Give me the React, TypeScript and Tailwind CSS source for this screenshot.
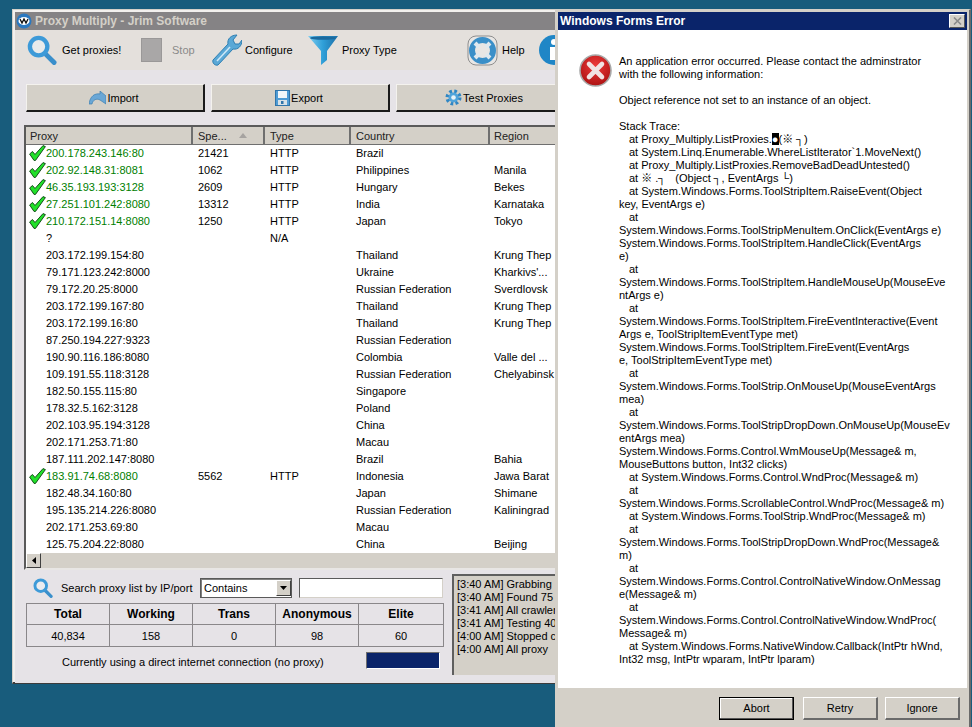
const proxies = [
  { ip: '200.178.243.146:80', speed: '21421', type: 'HTTP', country: 'Brazil', region: '', ok: true },
  { ip: '202.92.148.31:8081', speed: '1062', type: 'HTTP', country: 'Philippines', region: 'Manila', ok: true },
  { ip: '46.35.193.193:3128', speed: '2609', type: 'HTTP', country: 'Hungary', region: 'Bekes', ok: true },
  { ip: '27.251.101.242:8080', speed: '13312', type: 'HTTP', country: 'India', region: 'Karnataka', ok: true },
  { ip: '210.172.151.14:8080', speed: '1250', type: 'HTTP', country: 'Japan', region: 'Tokyo', ok: true },
  { ip: '?', speed: '', type: 'N/A', country: '', region: '' },
  { ip: '203.172.199.154:80', speed: '', type: '', country: 'Thailand', region: 'Krung Thep' },
  { ip: '79.171.123.242:8000', speed: '', type: '', country: 'Ukraine', region: "Kharkivs'..." },
  { ip: '79.172.20.25:8000', speed: '', type: '', country: 'Russian Federation', region: 'Sverdlovsk' },
  { ip: '203.172.199.167:80', speed: '', type: '', country: 'Thailand', region: 'Krung Thep' },
  { ip: '203.172.199.16:80', speed: '', type: '', country: 'Thailand', region: 'Krung Thep' },
  { ip: '87.250.194.227:9323', speed: '', type: '', country: 'Russian Federation', region: '' },
  { ip: '190.90.116.186:8080', speed: '', type: '', country: 'Colombia', region: 'Valle del ...' },
  { ip: '109.191.55.118:3128', speed: '', type: '', country: 'Russian Federation', region: 'Chelyabinsk' },
  { ip: '182.50.155.115:80', speed: '', type: '', country: 'Singapore', region: '' },
  { ip: '178.32.5.162:3128', speed: '', type: '', country: 'Poland', region: '' },
  { ip: '202.103.95.194:3128', speed: '', type: '', country: 'China', region: '' },
  { ip: '202.171.253.71:80', speed: '', type: '', country: 'Macau', region: '' },
  { ip: '187.111.202.147:8080', speed: '', type: '', country: 'Brazil', region: 'Bahia' },
  { ip: '183.91.74.68:8080', speed: '5562', type: 'HTTP', country: 'Indonesia', region: 'Jawa Barat', ok: true },
  { ip: '182.48.34.160:80', speed: '', type: '', country: 'Japan', region: 'Shimane' },
  { ip: '195.135.214.226:8080', speed: '', type: '', country: 'Russian Federation', region: 'Kaliningrad' },
  { ip: '202.171.253.69:80', speed: '', type: '', country: 'Macau', region: '' },
  { ip: '125.75.204.22:8080', speed: '', type: '', country: 'China', region: 'Beijing' },
];

const stats = [
  { label: 'Total', value: '40,834', cls: 'w-[83px]' },
  { label: 'Working', value: '158', cls: 'w-[83px]' },
  { label: 'Trans', value: '0', cls: 'w-[83px]' },
  { label: 'Anonymous', value: '98', cls: 'w-[83px]' },
  { label: 'Elite', value: '60', cls: 'flex-1' },
];

// only what shows beside the dialog
const logLines = [
  '[3:40 AM] Grabbing',
  '[3:40 AM] Found 75',
  '[3:41 AM] All crawler',
  '[3:41 AM] Testing 40',
  '[4:00 AM] Stopped c',
  '[4:00 AM] All proxy',
];

const traceTop = [
  'An application error occurred. Please contact the adminstrator',
  'with the following information:',
  '',
  'Object reference not set to an instance of an object.',
  '',
  'Stack Trace:',
];

const trace = [
  '  at System.Linq.Enumerable.WhereListIterator`1.MoveNext()',
  '  at Proxy_Multiply.ListProxies.RemoveBadDeadUntested()',
  '  at ※ .┐   (Object ┐, EventArgs └)',
  '  at System.Windows.Forms.ToolStripItem.RaiseEvent(Object',
  'key, EventArgs e)',
  '  at',
  'System.Windows.Forms.ToolStripMenuItem.OnClick(EventArgs e)',
  'System.Windows.Forms.ToolStripItem.HandleClick(EventArgs',
  'e)',
  '  at',
  'System.Windows.Forms.ToolStripItem.HandleMouseUp(MouseEve',
  'ntArgs e)',
  '  at',
  'System.Windows.Forms.ToolStripItem.FireEventInteractive(Event',
  'Args e, ToolStripItemEventType met)',
  'System.Windows.Forms.ToolStripItem.FireEvent(EventArgs',
  'e, ToolStripItemEventType met)',
  '  at',
  'System.Windows.Forms.ToolStrip.OnMouseUp(MouseEventArgs',
  'mea)',
  '  at',
  'System.Windows.Forms.ToolStripDropDown.OnMouseUp(MouseEv',
  'entArgs mea)',
  'System.Windows.Forms.Control.WmMouseUp(Message& m,',
  'MouseButtons button, Int32 clicks)',
  '  at System.Windows.Forms.Control.WndProc(Message& m)',
  '  at',
  'System.Windows.Forms.ScrollableControl.WndProc(Message& m)',
  '  at System.Windows.Forms.ToolStrip.WndProc(Message& m)',
  '  at',
  'System.Windows.Forms.ToolStripDropDown.WndProc(Message&',
  'm)',
  '  at',
  'System.Windows.Forms.Control.ControlNativeWindow.OnMessag',
  'e(Message& m)',
  '  at',
  'System.Windows.Forms.Control.ControlNativeWindow.WndProc(',
  'Message& m)',
  '  at System.Windows.Forms.NativeWindow.Callback(IntPtr hWnd,',
  'Int32 msg, IntPtr wparam, IntPtr lparam)',
];

function Magnifier({ size }: { size: number }) {
  return (
    <svg width={size} height={size} viewBox="0 0 30 31" className="shrink-0">
      <line x1="18" y1="19" x2="27.5" y2="28.5" stroke="#3a8fcb" strokeWidth="5" strokeLinecap="round" />
      <circle cx="11.5" cy="12" r="9" fill="#eef5fa" fillOpacity="0.5" stroke="#3d9ad8" strokeWidth="4.5" />
    </svg>
  );
}

function Wrench() {
  return (
    <svg width="32" height="32" viewBox="0 0 32 32" className="shrink-0">
      <path d="M3 26 L18 10 C17 5 21 1 27 1 L23 6 L25 10 L29 10 L32 6 C32 12 28 16 23 15 L8 31 C5 32 2 29 3 26 Z" fill="#5aa8d6" stroke="#2f7fb2" strokeWidth="1" />
      <line x1="7" y1="27" x2="20" y2="13" stroke="#cfe8f6" strokeWidth="1.5" />
    </svg>
  );
}

function Funnel() {
  return (
    <svg width="30" height="30" viewBox="0 0 30 30" className="shrink-0">
      <defs>
        <linearGradient id="fn" x1="0" y1="0" x2="1" y2="0">
          <stop offset="0" stopColor="#7fcdf0" />
          <stop offset="0.5" stopColor="#2f9fd8" />
          <stop offset="1" stopColor="#1c6fa8" />
        </linearGradient>
      </defs>
      <path d="M0 1 H30 L19 16 V25 L13 30 V16 Z" fill="url(#fn)" />
      <ellipse cx="15" cy="3" rx="13" ry="1.8" fill="#1b6a9e" />
    </svg>
  );
}

function LifeRing() {
  return (
    <svg width="31" height="31" viewBox="0 0 31 31" className="shrink-0">
      <rect x="1" y="1" width="29" height="29" rx="8" fill="#e8e6e4" stroke="#8d8d8d" />
      <circle cx="15.5" cy="15.5" r="10.5" fill="none" stroke="#3a8fc8" strokeWidth="6" />
      <path d="M8 8 L12 12 M23 8 L19 12 M8 23 L12 19 M23 23 L19 19" stroke="#dfe8ee" strokeWidth="4" />
    </svg>
  );
}

function InfoIcon() {
  return (
    <svg width="30" height="30" viewBox="0 0 30 30" className="shrink-0">
      <circle cx="15" cy="15" r="15" fill="#1f86c6" />
      <circle cx="15" cy="7" r="3" fill="#fff" />
      <rect x="11" y="12" width="8" height="13" fill="#fff" />
    </svg>
  );
}

function ImportIcon() {
  return (
    <svg width="17" height="14" viewBox="0 0 17 14" className="shrink-0">
      <path d="M0 13 C1 5 6 2 11 3 L11 0 L17 5 L17 13 L11 9 C7 7 4 9 3 13 Z" fill="#6aa7d6" stroke="#3d7fb0" strokeWidth="0.7" />
    </svg>
  );
}

function FloppyIcon() {
  return (
    <svg width="15" height="16" viewBox="0 0 15 16" className="shrink-0">
      <rect x="0.5" y="0.5" width="14" height="15" fill="#4e9bd4" stroke="#2f74aa" />
      <rect x="3" y="1" width="9" height="7" fill="#f2f6f9" />
      <rect x="3" y="10" width="9" height="5" fill="#d7e1e8" />
      <rect x="6" y="11" width="2.5" height="3" fill="#2f74aa" />
    </svg>
  );
}

function GearIcon() {
  return (
    <svg width="17" height="17" viewBox="0 0 17 17" className="shrink-0">
      <circle cx="8.5" cy="8.5" r="6.2" fill="none" stroke="#2f86c4" strokeWidth="3.6" strokeDasharray="2.6 2.27" />
      <circle cx="8.5" cy="8.5" r="5" fill="#4fa3da" />
      <circle cx="8.5" cy="8.5" r="2.3" fill="#e8f2f8" />
    </svg>
  );
}

function Check() {
  return (
    <svg width="17" height="16" viewBox="0 0 17 16" className="absolute left-[3px] top-0">
      <path d="M0.6 9 L3.5 6.5 L6 9.5 L14 0.6 L16.4 1.6 L6.5 15.4 L5 15.4 Z" fill="#22e02a" stroke="#0b3d10" strokeWidth="0.9" strokeLinejoin="round" />
    </svg>
  );
}

function ErrorIcon() {
  return (
    <svg width="33" height="33" viewBox="0 0 33 33" className="shrink-0">
      <defs>
        <radialGradient id="er" cx="0.5" cy="0.35" r="0.75">
          <stop offset="0" stopColor="#ee3a3a" />
          <stop offset="1" stopColor="#a30d0d" />
        </radialGradient>
      </defs>
      <circle cx="16.5" cy="16.5" r="15.5" fill="url(#er)" stroke="#a8a8a8" strokeWidth="1.6" />
      <path d="M10 10 L23 23 M23 10 L10 23" stroke="#f1e3e3" strokeWidth="4.6" strokeLinecap="round" />
    </svg>
  );
}

function ToolButton({ icon, label, disabled, cls }: { icon: React.ReactNode; label: string; disabled?: boolean; cls: string }) {
  return (
    <div className={`flex items-center ${cls}`}>
      {icon}
      <span className={disabled ? 'text-[#8a8a8a]' : 'text-black'}>{label}</span>
    </div>
  );
}

function WinButton({ icon, label }: { icon: React.ReactNode; label: string }) {
  return (
    <div className="flex h-[28px] w-[179px] shrink-0 items-center justify-center border-t border-l border-t-[#f4f2ee] border-l-[#f4f2ee] border-r-2 border-b-2 border-r-[#1a1a1a] border-b-[#1a1a1a] bg-[#d4d0c8] pr-[2px]">
      {icon}
      <span className="ml-[1px] pt-[1px]">{label}</span>
    </div>
  );
}

function DlgButton({ label, active }: { label: string; active?: boolean }) {
  return (
    <div className={`flex h-[23px] w-[75px] items-center justify-center bg-[#d4d0c8] ${active ? 'mr-[2px] border border-black shadow-[inset_-1px_-1px_0_#555,inset_1px_1px_0_#fff]' : 'border-t border-l border-t-white border-l-white border-r-2 border-b-2 border-r-[#6a6a6a] border-b-[#6a6a6a]'}`}>
      {label}
    </div>
  );
}

export default function App() {
  return (
    <div className="relative h-[727px] w-[972px] overflow-hidden bg-[#185c7c] text-[11px] leading-[13px] text-black [font-family:'Liberation_Sans','Noto_Sans_CJK_SC',sans-serif]">
      {/* Proxy Multiply window */}
      <div className="absolute left-[12px] top-[9px] h-[675px] w-[570px] border-b-2 border-b-[#3c3c3c] border-l border-l-[#d4d0c8] border-t border-t-[#d4d0c8] bg-[#f2f0ee] pl-[2px] pt-[2px]">
        <div className="flex h-[18px] items-center bg-[#858385] pl-[1px] text-[12px] font-bold text-[#d4d0c8]">
          <svg width="16" height="16" viewBox="0 0 16 16" className="mr-[3px] shrink-0">
            <circle cx="8" cy="8" r="7.5" fill="#2a78c0" />
            <ellipse cx="8" cy="8" rx="5.5" ry="4" fill="#fff" />
            <path d="M4 6 L6 10 L8 6 L10 10 L12 6" fill="none" stroke="#111" strokeWidth="1.3" />
          </svg>
          Proxy Multiply - Jrim Software
        </div>
        <div className="flex h-[40px] items-center bg-[#e4e0dc] pl-[12px]">
          <ToolButton cls="w-[114px] gap-[5px]" icon={<Magnifier size={30} />} label="Get proxies!" />
          <ToolButton
            cls="w-[69px] gap-[10px]"
            icon={<div className="h-[24px] w-[21px] shrink-0 border border-[#9a9898] bg-[#a9a7a7]" />}
            label="Stop"
            disabled
          />
          <ToolButton cls="w-[98px] gap-[3px]" icon={<Wrench />} label="Configure" />
          <ToolButton cls="w-[159px] gap-[4px]" icon={<Funnel />} label="Proxy Type" />
          <ToolButton cls="w-[72px] gap-[4px]" icon={<LifeRing />} label="Help" />
          <InfoIcon />
        </div>
        <div className="h-[613px] bg-[#e6e3e7] pl-[9px]">
          <div className="flex gap-[6px] pl-[2px] pt-[14px]">
            <WinButton icon={<ImportIcon />} label="Import" />
            <WinButton icon={<FloppyIcon />} label="Export" />
            <WinButton icon={<GearIcon />} label="Test Proxies" />
          </div>

          {/* Proxy list */}
          <div className="mt-[13px] h-[445px] w-[540px] border-2 border-b-[#e8e6e4] border-l-[#5a5a5a] border-r-[#5a5a5a] border-t-[#5a5a5a] bg-white">
            <div className="flex h-[18px] bg-[#d4d0c8] text-[#222]">
              <div className="w-[167px] border-r-2 border-b border-r-[#6f6f6f] border-b-[#6f6f6f] pl-[4px] pt-[3px]">Proxy</div>
              <div className="relative w-[72px] border-r-2 border-b border-r-[#6f6f6f] border-b-[#6f6f6f] pl-[5px] pt-[3px]">
                Spe...
                <svg width="8" height="5" viewBox="0 0 8 5" className="absolute left-[46px] top-[6px]">
                  <path d="M0 5 L4 0 L8 5 Z" fill="#a6a3a0" />
                </svg>
              </div>
              <div className="w-[86px] border-r-2 border-b border-r-[#6f6f6f] border-b-[#6f6f6f] pl-[5px] pt-[3px]">Type</div>
              <div className="w-[139px] border-r-2 border-b border-r-[#6f6f6f] border-b-[#6f6f6f] pl-[5px] pt-[3px]">Country</div>
              <div className="flex-1 border-b border-b-[#6f6f6f] pl-[4px] pt-[3px]">Region</div>
            </div>
            <div className="h-[408px]">
              {proxies.map((p) => (
                <div key={p.ip} className="relative flex h-[17px] items-center whitespace-nowrap">
                  {p.ok && <Check />}
                  <div className={`w-[167px] pl-[20px] ${p.ok ? 'text-[#008000]' : ''}`}>{p.ip}</div>
                  <div className="w-[72px] pl-[5px]">{p.speed}</div>
                  <div className="w-[86px] pl-[5px]">{p.type}</div>
                  <div className="w-[139px] pl-[5px]">{p.country}</div>
                  <div className="pl-[4px]">{p.region}</div>
                </div>
              ))}
            </div>
            <div className="flex h-[15px] bg-[#d4d0c8]">
              <div className="flex w-[15px] items-center justify-center border-t border-l border-t-white border-l-white border-r border-b border-r-[#404040] border-b-[#404040] bg-[#d4d0c8]">
                <svg width="4" height="7" viewBox="0 0 4 7">
                  <path d="M4 0 L0 3.5 L4 7 Z" fill="#000" />
                </svg>
              </div>
            </div>
          </div>

          <div className="flex">
            <div className="w-[428px]">
              {/* Search row */}
              <div className="mt-[8px] flex h-[20px] items-center pl-[9px]">
                <Magnifier size={20} />
                <span className="ml-[8px] w-[139px] whitespace-nowrap">Search proxy list by IP/port</span>
                <div className="flex h-[20px] w-[92px] items-center border border-[#5a5a5a] bg-white pl-[3px] shadow-[inset_1px_1px_0_#808080]">
                  <span className="flex-1">Contains</span>
                  <div className="flex h-[16px] w-[15px] items-center justify-center border-t border-l border-t-white border-l-white border-r border-b border-r-[#404040] border-b-[#404040] bg-[#d4d0c8]">
                    <svg width="7" height="4" viewBox="0 0 7 4">
                      <path d="M0 0 H7 L3.5 4 Z" fill="#000" />
                    </svg>
                  </div>
                </div>
                <div className="ml-[7px] h-[20px] w-[144px] border-t border-l border-t-[#5a5a5a] border-l-[#5a5a5a] border-r border-b border-r-[#d4d0c8] border-b-[#d4d0c8] bg-white" />
              </div>
              {/* Stats table */}
              <div className="ml-[2px] mt-[5px] flex h-[44px] w-[418px] border border-[#8a878a]">
                {stats.map((s, i) => (
                  <div key={s.label} className={`flex flex-col ${s.cls} ${i < 4 ? 'border-r border-r-[#8a878a]' : ''}`}>
                    <div className="flex h-[21px] items-center justify-center border-b border-b-[#8a878a] text-[12px] font-bold">{s.label}</div>
                    <div className="flex flex-1 items-center justify-center pt-[1px]">{s.value}</div>
                  </div>
                ))}
              </div>
              {/* Connection status */}
              <div className="mt-[5px] flex h-[17px] items-center">
                <span className="ml-[38px] w-[304px] whitespace-nowrap pt-[3px]">Currently using a direct internet connection (no proxy)</span>
                <div className="h-[17px] w-[74px] border-t border-l border-t-[#6f6f6f] border-l-[#6f6f6f] border-r border-b border-r-white border-b-white bg-[#0a246a]" />
              </div>
            </div>
            {/* Log box */}
            <div className="mt-[4px] h-[101px] w-[110px] whitespace-nowrap border-t-2 border-l-2 border-t-[#5f5f5f] border-l-[#5f5f5f] bg-[#d4d0c8] pl-[3px] pt-[2px]">
              {logLines.map((l) => (
                <div key={l} className="h-[13px]">{l}</div>
              ))}
            </div>
          </div>
        </div>
      </div>

      {/* Error dialog */}
      <div className="absolute left-[555px] top-[9px] flex h-[718px] w-[416px] flex-col border-l border-t border-r-2 border-l-[#d4d0c8] border-t-[#d4d0c8] border-r-[#6a6a6a] bg-[#d4d0c8] px-[2px] pt-[2px]">
        <div className="flex h-[18px] shrink-0 items-center justify-between bg-[#0a246a] pl-[2px] pr-[2px] text-[12px] font-bold text-white">
          Windows Forms Error
          <div className="flex h-[14px] w-[16px] items-center justify-center border-t border-l border-t-white border-l-white border-r border-b border-r-[#555] border-b-[#555] bg-[#d4d0c8]">
            <svg width="9" height="8" viewBox="0 0 9 8">
              <path d="M1 0.5 L8 7.5 M8 0.5 L1 7.5" stroke="#8a8a8a" strokeWidth="1.6" />
            </svg>
          </div>
        </div>
        <div className="flex h-[658px] shrink-0 whitespace-nowrap bg-white pl-[21px] pt-[24px]">
          <ErrorIcon />
          <div className="ml-[7px] pt-[1px]">
            {traceTop.map((l, i) => (
              <div key={i} className="h-[13px]">{l}</div>
            ))}
            <div className="h-[13px] pl-[10px]">
              at Proxy_Multiply.ListProxies.
              <span className="bg-black text-white">●</span>
              (※   ┐)
            </div>
            {trace.map((l, i) => (
              <div key={i} className={`h-[13px] whitespace-pre ${l.startsWith('  ') ? 'pl-[10px]' : ''}`}>{l.trim()}</div>
            ))}
          </div>
        </div>
        <div className="flex flex-1 items-start justify-end gap-[7px] pr-[7px] pt-[9px]">
          <DlgButton label="Abort" active />
          <DlgButton label="Retry" />
          <DlgButton label="Ignore" />
        </div>
      </div>
    </div>
  );
}
